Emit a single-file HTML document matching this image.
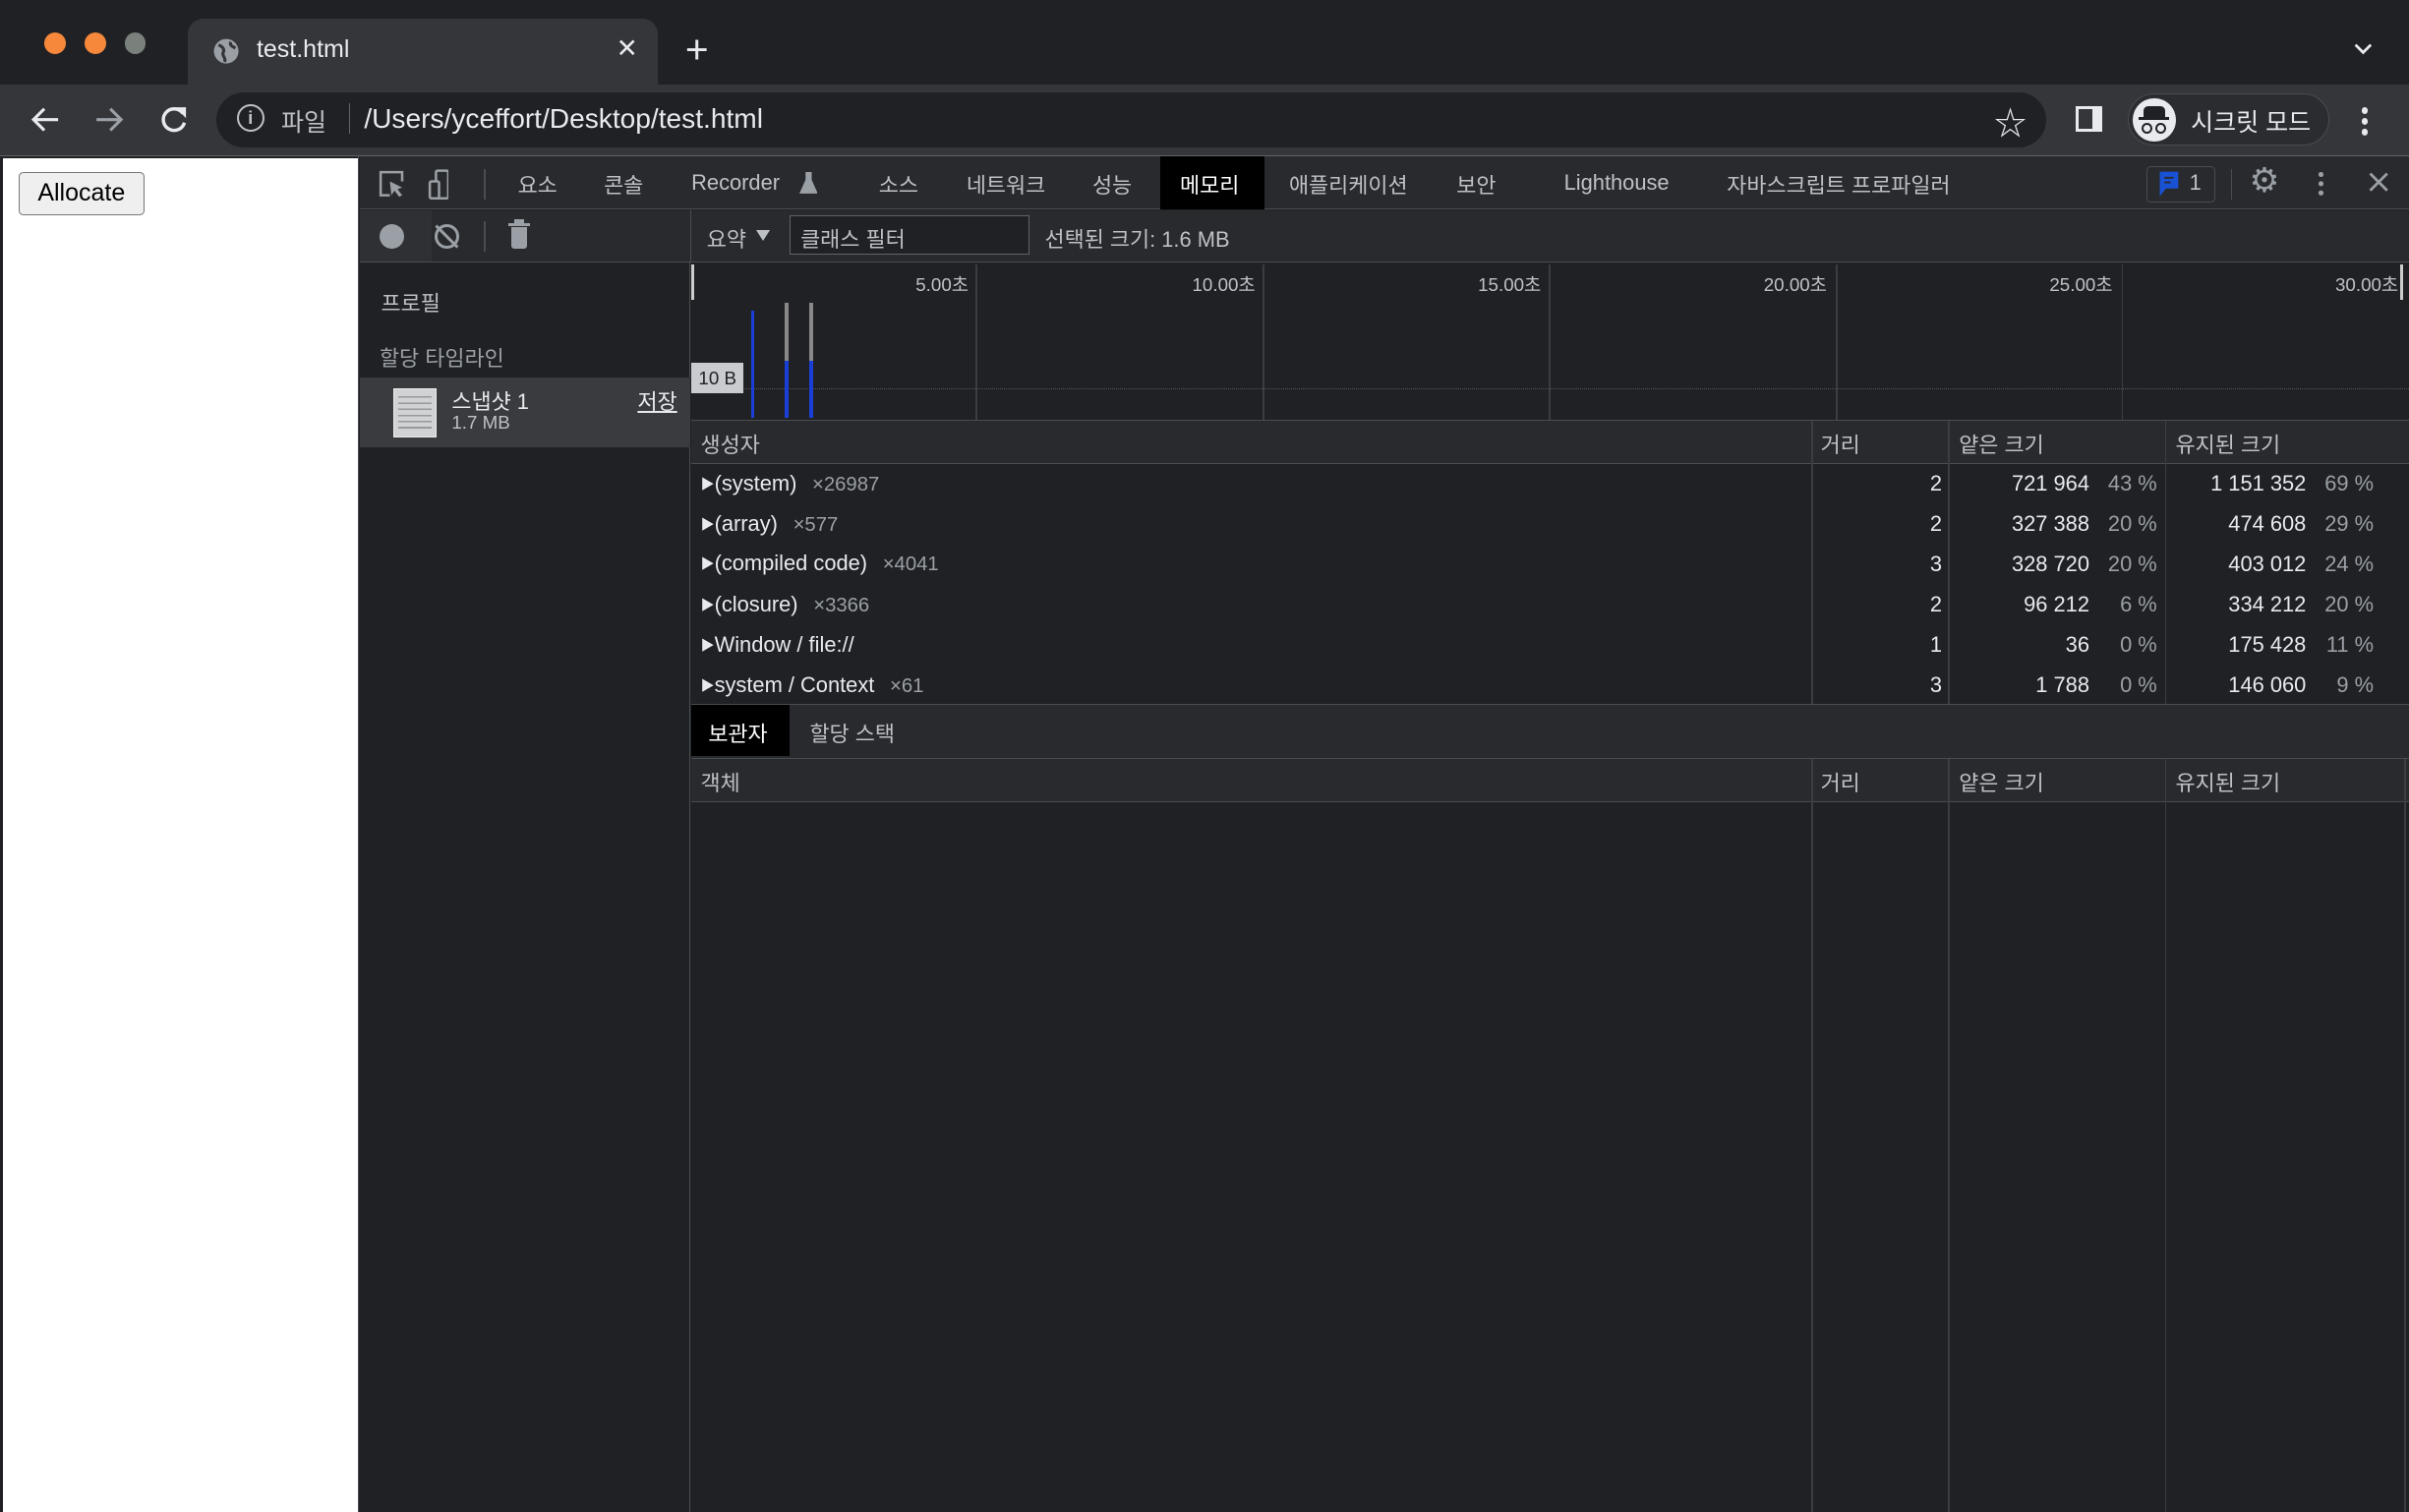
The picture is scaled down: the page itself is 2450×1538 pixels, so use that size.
<!DOCTYPE html>
<html><head><meta charset="utf-8"><style>
*{margin:0;padding:0;box-sizing:border-box}
html,body{width:2450px;height:1538px;overflow:hidden;background:#202124}
#r{position:relative;width:1568px;height:984px;zoom:1.5625;font-family:"Liberation Sans","Noto Sans CJK KR",sans-serif;color:#e8eaed;font-size:15px;background:#202124;overflow:hidden}
.a{position:absolute;white-space:nowrap}
.t{font-size:14px;color:#bdc1c6}
.g{color:#9aa0a6}
.vl{position:absolute;width:1px;background:#3c3d41}
.num{position:absolute;font-size:14px;color:#e8eaed;text-align:right}
.row{position:absolute;left:456px;height:26px;line-height:26px;font-size:14px;color:#e8eaed;white-space:nowrap}
.row span.tr{font-size:9px;vertical-align:1px}
.row span.g{font-size:13px;margin-left:10px}
</style></head><body><div id="r">
<div class="a" style="left:0;top:0;width:1568px;height:55px;background:#202124"></div>
<div class="a" style="left:29px;top:21px;width:14px;height:14px;border-radius:50%;background:#f5883a"></div>
<div class="a" style="left:55px;top:21px;width:14px;height:14px;border-radius:50%;background:#f5883a"></div>
<div class="a" style="left:81px;top:21px;width:14px;height:14px;border-radius:50%;background:#7a807c"></div>
<div class="a" style="left:122px;top:12px;width:306px;height:44px;background:#35363a;border-radius:10px 10px 0 0"></div>
<svg class="a" style="left:138px;top:24px" width="18" height="18" viewBox="0 0 18 18"><circle cx="9" cy="9" r="8" fill="#9aa0a6"/><path d="M4 5c3 1 4 3 3 5s2 3 1 6M12 3c-1 2 1 3 3 4" stroke="#35363a" stroke-width="2" fill="none"/></svg>
<div class="a" style="left:167px;top:23px;font-size:16px;color:#e8eaed">test.html</div>
<div class="a" style="left:401px;top:22px;font-size:17px;color:#e8eaed">✕</div>
<div class="a" style="left:446px;top:17px;font-size:26px;color:#e8eaed;font-weight:300">+</div>
<svg class="a" style="left:1532px;top:28px" width="12" height="8" viewBox="0 0 12 8"><path d="M1 1l5 5 5-5" stroke="#e8eaed" stroke-width="1.8" fill="none"/></svg>
<div class="a" style="left:0;top:55px;width:1568px;height:47px;background:#35363a;border-bottom:1px solid #5f6368"></div>
<svg class="a" style="left:20px;top:68px" width="20" height="20" viewBox="0 0 20 20"><path d="M18 10H3M9 3l-7 7 7 7" stroke="#e8eaed" stroke-width="2" fill="none"/></svg>
<svg class="a" style="left:61px;top:68px" width="20" height="20" viewBox="0 0 20 20"><path d="M2 10h15M11 3l7 7-7 7" stroke="#9aa0a6" stroke-width="2" fill="none"/></svg>
<svg class="a" style="left:103px;top:68px" width="20" height="20" viewBox="0 0 20 20"><path d="M16 6A7 7 0 1 0 17 12" stroke="#e8eaed" stroke-width="2.2" fill="none"/><path d="M11 2h7v7z" fill="#e8eaed"/></svg>
<div class="a" style="left:141px;top:60px;width:1191px;height:36px;background:#202124;border-radius:18px"></div>
<div class="a" style="left:154px;top:68px;width:18px;height:18px;border:1.6px solid #bdc1c6;border-radius:50%;font-size:12px;text-align:center;line-height:15px;color:#bdc1c6;font-weight:bold">i</div>
<div class="a" style="left:183px;top:67px;font-size:16px;color:#bdc1c6">파일</div>
<div class="a" style="left:227px;top:67px;width:1px;height:20px;background:#5f6368"></div>
<div class="a" style="left:237px;top:67px;font-size:18px;color:#e8eaed">/Users/yceffort/Desktop/test.html</div>
<div class="a" style="left:1298px;top:64px;font-size:21px;color:#e8eaed">☆</div>
<div class="a" style="left:1351px;top:69px;width:17px;height:17px;border:2px solid #e8eaed;border-right-width:7px"></div>
<div class="a" style="left:1385px;top:61px;width:131px;height:34px;border-radius:17px;background:#2b2c2f;border:1px solid #4a4b4f"></div>
<div class="a" style="left:1388px;top:64px;width:28px;height:28px;border-radius:50%;background:#e8eaed"></div>
<div class="a" style="left:1395px;top:69px;width:14px;height:7px;background:#202124;border-radius:3px 3px 0 0"></div>
<div class="a" style="left:1392px;top:76px;width:20px;height:2px;background:#202124"></div>
<div class="a" style="left:1394px;top:80px;width:7px;height:7px;border:1.5px solid #202124;border-radius:50%"></div>
<div class="a" style="left:1403px;top:80px;width:7px;height:7px;border:1.5px solid #202124;border-radius:50%"></div>
<div class="a" style="left:1426px;top:67px;font-size:16px;color:#e8eaed">시크릿 모드</div>
<div class="a" style="left:1537px;top:70px;width:4px;height:4px;border-radius:50%;background:#e8eaed;box-shadow:0 7px 0 #e8eaed,0 14px 0 #e8eaed"></div>
<div class="a" style="left:2px;top:103px;width:231px;height:881px;background:#fff"></div>
<div class="a" style="left:12px;top:112px;width:82px;height:28px;background:#efefef;border:1px solid #767676;border-radius:3px;color:#000;font-size:16px;text-align:center;line-height:26px">Allocate</div>
<div class="a" style="left:233px;top:102px;width:1335px;height:882px;background:#202124;border-left:1px solid #494c50"></div>
<div class="a" style="left:234px;top:102px;width:1334px;height:34px;background:#292a2d;border-bottom:1px solid #494c50"></div>
<svg class="a" style="left:246px;top:110px" width="46" height="20" viewBox="0 0 46 20"><path d="M8 17H2V2h14v6" stroke="#9aa0a6" stroke-width="1.6" fill="none"/><path d="M8 8l8 4-3 1 3 4-2 1-3-4-2 3z" fill="#9aa0a6"/><rect x="38" y="1" width="8" height="18" rx="1" stroke="#9aa0a6" stroke-width="1.6" fill="none"/><rect x="34" y="8" width="6" height="11" rx="1" stroke="#9aa0a6" stroke-width="1.6" fill="#292a2d"/></svg>
<div class="a" style="left:315px;top:110px;width:1px;height:20px;background:#494c50"></div>
<div class="a t" style="left:337px;top:110px">요소</div>
<div class="a t" style="left:393px;top:110px">콘솔</div>
<div class="a t" style="left:450px;top:111px">Recorder</div>
<svg class="a" style="left:520px;top:112px" width="12" height="14" viewBox="0 0 12 14"><path d="M4 0h4v5l4 9H0l4-9z" fill="#9aa0a6"/></svg>
<div class="a t" style="left:572px;top:110px">소스</div>
<div class="a t" style="left:629px;top:110px">네트워크</div>
<div class="a t" style="left:711px;top:110px">성능</div>
<div class="a" style="left:755px;top:102px;width:68px;height:34px;background:#000"></div>
<div class="a" style="left:768px;top:110px;font-size:14px;color:#fff">메모리</div>
<div class="a t" style="left:839px;top:110px">애플리케이션</div>
<div class="a t" style="left:948px;top:110px">보안</div>
<div class="a t" style="left:1018px;top:111px">Lighthouse</div>
<div class="a t" style="left:1124px;top:110px">자바스크립트 프로파일러</div>
<div class="a" style="left:1397px;top:108px;width:45px;height:24px;border:1px solid #494c50;border-radius:3px"></div>
<svg class="a" style="left:1405px;top:111px" width="14" height="18" viewBox="0 0 14 18"><path d="M1 1h12v11H5l-4 5z" fill="#1a52d6"/><path d="M4 5h6M4 8h4" stroke="#292a2d" stroke-width="1.2"/></svg>
<div class="a t" style="left:1425px;top:111px">1</div>
<div class="a" style="left:1452px;top:110px;width:1px;height:20px;background:#494c50"></div>
<div class="a" style="left:1464px;top:105px;font-size:22px;color:#9aa0a6">⚙</div>
<div class="a" style="left:1509px;top:112px;width:3px;height:3px;border-radius:50%;background:#9aa0a6;box-shadow:0 6px 0 #9aa0a6,0 12px 0 #9aa0a6"></div>
<svg class="a" style="left:1542px;top:112px" width="13" height="13" viewBox="0 0 13 13"><path d="M1 1l11 11M12 1L1 12" stroke="#9aa0a6" stroke-width="1.8"/></svg>
<div class="a" style="left:234px;top:137px;width:1334px;height:34px;background:#292a2d;border-bottom:1px solid #494c50"></div>
<div class="a" style="left:234px;top:137px;width:47px;height:33px;background:#2f3033"></div>
<div class="a" style="left:247px;top:146px;width:16px;height:16px;border-radius:50%;background:#9aa0a6"></div>
<div class="a" style="left:283px;top:146px;width:16px;height:16px;border:2px solid #9aa0a6;border-radius:50%"></div>
<div class="a" style="left:290px;top:144px;width:2px;height:20px;background:#9aa0a6;transform:rotate(-45deg)"></div>
<div class="a" style="left:315px;top:144px;width:1px;height:20px;background:#494c50"></div>
<div class="a" style="left:333px;top:148px;width:10px;height:14px;background:#9aa0a6;border-radius:0 0 2px 2px"></div>
<div class="a" style="left:331px;top:145px;width:14px;height:2px;background:#9aa0a6"></div>
<div class="a" style="left:335px;top:143px;width:6px;height:2px;background:#9aa0a6"></div>
<div class="a" style="left:449px;top:137px;width:1px;height:34px;background:#494c50"></div>
<div class="a t" style="left:460px;top:145px">요약</div>
<svg class="a" style="left:492px;top:150px" width="9" height="7" viewBox="0 0 9 7"><path d="M0 0h9L4.5 7z" fill="#bdc1c6"/></svg>
<div class="a" style="left:514px;top:140px;width:156px;height:26px;border:1px solid #5f6368;background:#202124"></div>
<div class="a t" style="left:521px;top:145px">클래스 필터</div>
<div class="a t" style="left:680px;top:145px">선택된 크기: 1.6 MB</div>
<div class="a" style="left:234px;top:171px;width:215px;height:813px;background:#202124;border-right:1px solid #494c50"></div>
<div class="a t" style="left:248px;top:187px">프로필</div>
<div class="a t" style="left:247px;top:223px;color:#9aa0a6">할당 타임라인</div>
<div class="a" style="left:234px;top:246px;width:215px;height:45px;background:#3a3b3e"></div>
<div class="a" style="left:256px;top:253px;width:28px;height:32px;background:#d0d2d4;border:1px solid #eee"></div>
<div class="a" style="left:259px;top:258px;width:22px;height:22px;background:repeating-linear-gradient(#999 0 1px,transparent 1px 4px)"></div>
<div class="a t" style="left:294px;top:251px;color:#e8eaed">스냅샷 1</div>
<div class="a" style="left:294px;top:268px;font-size:12px;color:#bdc1c6">1.7 MB</div>
<div class="a t" style="left:415px;top:251px;text-decoration:underline;color:#e8eaed">저장</div>
<div class="a" style="left:450px;top:171px;width:1118px;height:103px;background:#202124;border-bottom:1px solid #494c50"></div>
<div class="a" style="left:450px;top:172px;width:2px;height:23px;background:#ccc"></div>
<div class="a" style="left:1562px;top:172px;width:2px;height:23px;background:#ccc"></div>
<div class="vl" style="left:635px;top:172px;height:101px"></div>
<div class="vl" style="left:822px;top:172px;height:101px"></div>
<div class="vl" style="left:1008px;top:172px;height:101px"></div>
<div class="vl" style="left:1195px;top:172px;height:101px"></div>
<div class="vl" style="left:1381px;top:172px;height:101px"></div>
<div class="a" style="left:450px;top:253px;width:1118px;border-top:1px dotted #555"></div>
<div class="a" style="left:596px;top:176px;font-size:12px;color:#bdc1c6">5.00초</div>
<div class="a" style="left:776px;top:176px;font-size:12px;color:#bdc1c6">10.00초</div>
<div class="a" style="left:962px;top:176px;font-size:12px;color:#bdc1c6">15.00초</div>
<div class="a" style="left:1148px;top:176px;font-size:12px;color:#bdc1c6">20.00초</div>
<div class="a" style="left:1334px;top:176px;font-size:12px;color:#bdc1c6">25.00초</div>
<div class="a" style="left:1520px;top:176px;font-size:12px;color:#bdc1c6">30.00초</div>
<div class="a" style="left:450px;top:236px;width:34px;height:20px;background:#c9cbce;color:#202124;font-size:12px;line-height:20px;text-align:center">10 B</div>
<div class="a" style="left:489px;top:202px;width:2px;height:70px;background:#1a3fd6"></div>
<div class="a" style="left:511px;top:197px;width:2px;height:38px;background:#888"></div>
<div class="a" style="left:511px;top:235px;width:2px;height:37px;background:#1a3fd6"></div>
<div class="a" style="left:527px;top:197px;width:2px;height:38px;background:#888"></div>
<div class="a" style="left:527px;top:235px;width:2px;height:37px;background:#1a3fd6"></div>
<div class="a" style="left:450px;top:274px;width:1118px;height:28px;background:#292a2d;border-bottom:1px solid #494c50"></div>
<div class="vl" style="left:1179px;top:274px;height:184px"></div>
<div class="vl" style="left:1268px;top:274px;height:184px"></div>
<div class="vl" style="left:1409px;top:274px;height:184px"></div>
<div class="a t" style="left:456px;top:279px">생성자</div>
<div class="a t" style="left:1185px;top:279px">거리</div>
<div class="a t" style="left:1275px;top:279px">얕은 크기</div>
<div class="a t" style="left:1416px;top:279px">유지된 크기</div>
<div class="row" style="top:302px"><span class="tr">▶</span>(system)<span class="g">×26987</span></div>
<div class="row" style="top:328px"><span class="tr">▶</span>(array)<span class="g">×577</span></div>
<div class="row" style="top:354px"><span class="tr">▶</span>(compiled code)<span class="g">×4041</span></div>
<div class="row" style="top:381px"><span class="tr">▶</span>(closure)<span class="g">×3366</span></div>
<div class="row" style="top:407px"><span class="tr">▶</span>Window / file://</div>
<div class="row" style="top:433px"><span class="tr">▶</span>system / Context<span class="g">×61</span></div>
<div class="num" style="left:1180px;width:84px;top:302px;line-height:26.2px">2<br>2<br>3<br>2<br>1<br>3</div>
<div class="num" style="left:1270px;width:90px;top:302px;line-height:26.2px">721 964<br>327 388<br>328 720<br>96 212<br>36<br>1 788</div>
<div class="num" style="left:1362px;width:42px;top:302px;line-height:26.2px;color:#9aa0a6">43 %<br>20 %<br>20 %<br>6 %<br>0 %<br>0 %</div>
<div class="num" style="left:1410px;width:91px;top:302px;line-height:26.2px">1 151 352<br>474 608<br>403 012<br>334 212<br>175 428<br>146 060</div>
<div class="num" style="left:1503px;width:42px;top:302px;line-height:26.2px;color:#9aa0a6">69 %<br>29 %<br>24 %<br>20 %<br>11 %<br>9 %</div>
<div class="a" style="left:450px;top:458px;width:1118px;height:36px;background:#292a2d;border-top:1px solid #494c50;border-bottom:1px solid #494c50"></div>
<div class="a" style="left:450px;top:459px;width:64px;height:33px;background:#000"></div>
<div class="a" style="left:461px;top:467px;font-size:14px;color:#fff">보관자</div>
<div class="a t" style="left:527px;top:467px">할당 스택</div>
<div class="a" style="left:450px;top:494px;width:1118px;height:28px;background:#292a2d;border-bottom:1px solid #494c50"></div>
<div class="a t" style="left:456px;top:499px">객체</div>
<div class="a t" style="left:1185px;top:499px">거리</div>
<div class="a t" style="left:1275px;top:499px">얕은 크기</div>
<div class="a t" style="left:1416px;top:499px">유지된 크기</div>
<div class="vl" style="left:1179px;top:494px;height:490px"></div>
<div class="vl" style="left:1268px;top:494px;height:490px"></div>
<div class="vl" style="left:1409px;top:494px;height:490px"></div>
<div class="vl" style="left:1565px;top:494px;height:490px"></div>
</div></body></html>
